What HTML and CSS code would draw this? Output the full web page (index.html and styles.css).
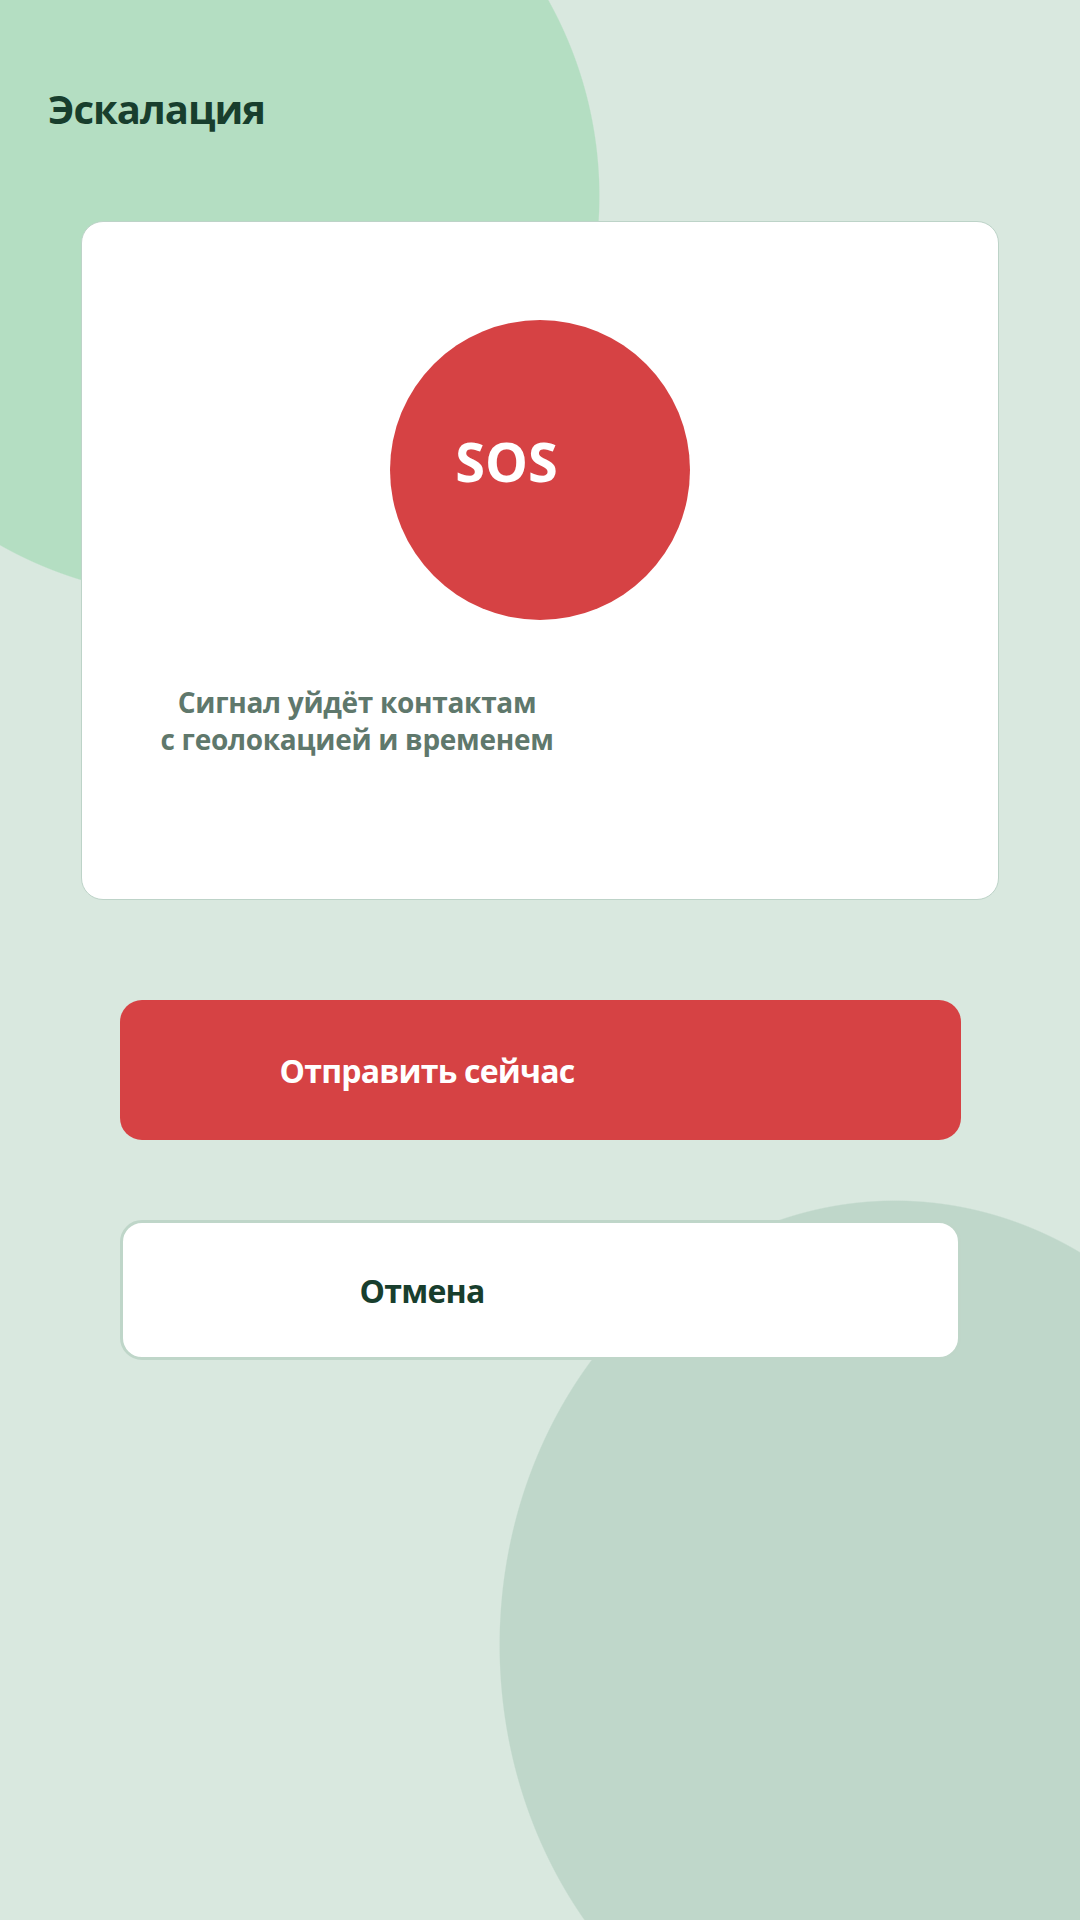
FILE: index.html
```html
<!DOCTYPE html>
<html lang="ru">
<head>
    <meta charset="UTF-8">
    <meta name="viewport" content="width=device-width, initial-scale=1.0">
    <title>Эскалация</title>
    <link rel="stylesheet" href="styles.css">
</head>
<body>
    <div class="screen">
        <h1 class="page-title">Эскалация</h1>

        <div class="card">
            <div class="sos-circle">
                <span class="sos-label">SOS</span>
            </div>
            <p class="hint">Сигнал уйдёт контактам<br>с геолокацией и временем</p>
        </div>

        <button class="btn btn-send">Отправить сейчас</button>
        <button class="btn btn-cancel">Отмена</button>
    </div>
</body>
</html>
```

FILE: styles.css
```css
html, body {
    margin: 0;
    overflow: hidden;
}

/* the two soft shapes behind the content are painted as gradients */
body {
    width: 1080px;
    height: 1920px;
    background:
        radial-gradient(circle 402px at 198px 196px, #b4dec2 99.7%, rgba(180, 222, 194, 0) 100%),
        radial-gradient(396px 445px at 895px 1645px, #bfd7ca 99.7%, rgba(191, 215, 202, 0) 100%),
        #d9e8df;
    font-family: "Open Sans", "Noto Sans", sans-serif;
}

.screen {
    display: flex;
    flex-direction: column;
    align-items: flex-start;
    padding-top: 82px;
}

.page-title {
    margin: 0 0 0 48px;
    font-size: 40px;
    line-height: 54px;
    letter-spacing: -1px;
    font-weight: 700;
    color: #183e2d;
}

.card {
    box-sizing: border-box;
    width: 918px;
    height: 679px;
    margin: 85px 0 0 81px;
    padding-top: 98px;
    background: #fff;
    border: 1px solid #bdd3c8;
    border-radius: 22px;
}

.sos-circle {
    display: flex;
    align-items: center;
    justify-content: center;
    width: 300px;
    height: 300px;
    margin: 0 auto;
    padding: 0 67px 18px 0;
    box-sizing: border-box;
    border-radius: 50%;
    background: #d64244;
}

.sos-label {
    color: #fff;
    font-size: 54px;
    font-weight: 700;
}

.hint {
    width: 440px;
    margin: 64px 0 0 55px;
    text-align: center;
    font-size: 28px;
    line-height: 37px;
    letter-spacing: -0.3px;
    font-weight: 700;
    color: #5f786c;
}

.btn {
    box-sizing: border-box;
    display: flex;
    align-items: center;
    justify-content: center;
    width: 841px;
    height: 140px;
    margin-left: 120px;
    border-radius: 22px;
    font-family: inherit;
    font-size: 32px;
    letter-spacing: -0.8px;
    font-weight: 700;
    cursor: pointer;
}

.btn-send {
    margin-top: 100px;
    padding: 0 227px 0 0;
    border: none;
    background: #d64244;
    color: #fff;
}

.btn-cancel {
    margin-top: 80px;
    padding: 0 237px 0 0;
    border: 3px solid #bfd6c9;
    background: #fff;
    color: #183e2d;
}
```
